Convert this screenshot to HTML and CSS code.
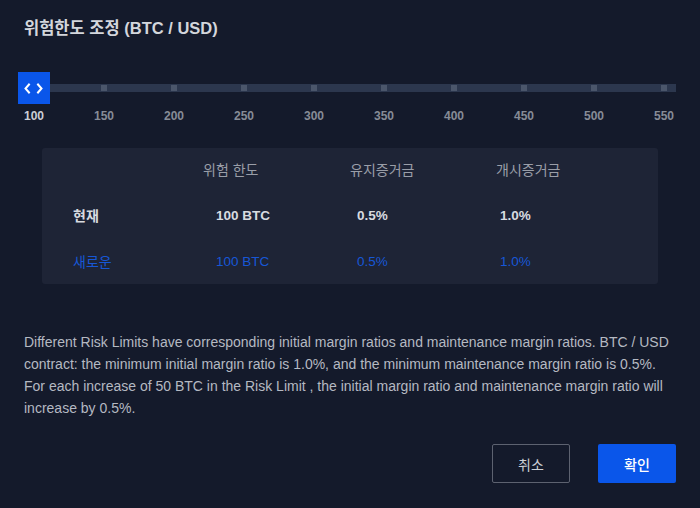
FILE: index.html
```html
<!DOCTYPE html>
<html lang="ko">
<head>
<meta charset="utf-8">
<link rel="stylesheet" href="styles.css">
</head>
<body>
<div class="dialog">
  <h1 class="title">위험한도 조정 (BTC / USD)</h1>

  <div class="slider">
    <div class="track">
      <span class="tick"></span><span class="tick"></span><span class="tick"></span>
      <span class="tick"></span><span class="tick"></span><span class="tick"></span>
      <span class="tick"></span><span class="tick"></span><span class="tick"></span>
    </div>
    <div class="handle">
      <svg width="32" height="32" viewBox="0 0 32 32">
        <path d="M11 12.5 L7.5 16.5 L11 20.5" fill="none" stroke="#fff" stroke-width="2" stroke-linecap="square"/>
        <path d="M20 12.5 L23.5 16.5 L20 20.5" fill="none" stroke="#fff" stroke-width="2" stroke-linecap="square"/>
      </svg>
    </div>
  </div>
  <div class="labels">
    <span class="lab active">100</span><span class="lab">150</span><span class="lab">200</span>
    <span class="lab">250</span><span class="lab">300</span><span class="lab">350</span>
    <span class="lab">400</span><span class="lab">450</span><span class="lab">500</span>
    <span class="lab">550</span>
  </div>

  <div class="table">
    <div class="cell head"></div>
    <div class="cell head">위험 한도</div>
    <div class="cell head">유지증거금</div>
    <div class="cell head">개시증거금</div>

    <div class="cell name">현재</div>
    <div class="cell val c2">100 BTC</div>
    <div class="cell val c3">0.5%</div>
    <div class="cell val c4">1.0%</div>

    <div class="cell name new">새로운</div>
    <div class="cell val new c2">100 BTC</div>
    <div class="cell val new c3">0.5%</div>
    <div class="cell val new c4">1.0%</div>
  </div>

  <p class="note">Different Risk Limits have corresponding initial margin ratios and maintenance margin ratios. BTC / USD contract: the minimum initial margin ratio is 1.0%, and the minimum maintenance margin ratio is 0.5%. For each increase of 50 BTC in the Risk Limit , the initial margin ratio and maintenance margin ratio will increase by 0.5%.</p>

  <div class="actions">
    <button class="btn cancel">취소</button>
    <button class="btn ok">확인</button>
  </div>
</div>
</body>
</html>
```

FILE: styles.css
```css
* { box-sizing: border-box; }
html, body {
  margin: 0;
  padding: 0;
  background: #141a2b;
}
body {
  font-family: "Liberation Sans", Arial, "Noto Sans CJK KR", sans-serif;
  width: 700px;
  height: 508px;
  overflow: hidden;
}
.dialog {
  padding: 16px 24px 0 24px;
}
.title {
  margin: 0;
  font-size: 16.5px;
  line-height: 24px;
  font-weight: bold;
  color: #d3d6dc;
}
.slider {
  position: relative;
  margin: 32px 0 0 -6px;
  padding-top: 12px;
  width: 658px;
  height: 32px;
}
.track {
  height: 8px;
  background: #2c374e;
  display: flex;
  align-items: center;
  gap: 64px;
  padding-left: 83px;
}
.tick {
  width: 6px;
  height: 6px;
  background: #4b566b;
  flex: none;
}
.handle {
  position: absolute;
  left: 0;
  top: 0;
  width: 32px;
  height: 32px;
  background: #0a56ea;
}
.handle svg { display: block; }
.labels {
  margin-left: -25px;
  display: grid;
  grid-template-columns: repeat(10, 70px);
  justify-items: center;
  height: 16px;
  margin-top: 4px;
}
.lab {
  font-size: 12px;
  font-weight: bold;
  line-height: 16px;
  color: #878c97;
}
.lab.active { color: #cbced5; }

.table {
  margin: 24px 0 0 18px;
  width: 616px;
  background: #1e2436;
  border-radius: 3px;
  display: grid;
  grid-template-columns: 161px 147px 146px 162px;
  grid-template-rows: 44px 46px 46px;
}
.cell {
  display: flex;
  align-items: center;
  font-size: 14px;
}
.cell:nth-child(4n+1) { padding-left: 31px; }
.head {
  color: #9a9ea8;
  padding-bottom: 2px;
  font-family: "Noto Sans CJK KR", sans-serif;
  font-size: 14px;
}
.name {
  color: #d8dbe0;
  font-weight: bold;
  font-family: "Noto Sans CJK KR", sans-serif;
  font-size: 14px;
}
.val {
  color: #d8dbe0;
  font-weight: bold;
  font-size: 13.5px;
}
.c2 { padding-left: 13px; }
.c3 { padding-left: 7px; }
.c4 { padding-left: 4px; }
.new {
  color: #1757d6;
  font-weight: normal;
}
.note {
  margin: 47px 0 0 0;
  font-size: 14px;
  line-height: 22px;
  color: #b5b9c2;
}
.actions {
  margin-top: 25px;
  display: flex;
  justify-content: flex-end;
  gap: 28px;
}
.btn {
  width: 78px;
  height: 39px;
  border-radius: 2px;
  font-family: "Noto Sans CJK KR", sans-serif;
  font-size: 14px;
  cursor: pointer;
}
.cancel {
  background: transparent;
  border: 1px solid #5d6270;
  color: #cdd0d6;
}
.ok {
  background: #0a56ea;
  border: none;
  color: #ffffff;
  font-weight: 500;
}
```
